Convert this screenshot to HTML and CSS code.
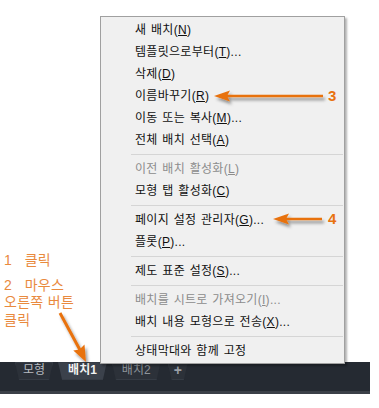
FILE: index.html
```html
<!DOCTYPE html>
<html lang="ko">
<head>
    <meta charset="UTF-8">
    <meta name="viewport" content="width=device-width, initial-scale=1.0">
    <title>배치 탭 메뉴</title>
    <link rel="stylesheet" href="styles.css">
</head>
<body>
    <div class="screen">
        <div class="workspace">
            <div class="note-left">
                <p class="step">1&nbsp;&nbsp;&nbsp;클릭</p>
                <p class="step">2&nbsp;&nbsp;&nbsp;마우스<br>오른쪽 버튼<br>클릭</p>
            </div>

            <ul class="context-menu">
                <li class="item">새 배치(<u>N</u>)</li>
                <li class="item">템플릿으로부터(<u>T</u>)...</li>
                <li class="item">삭제(<u>D</u>)</li>
                <li class="item">이름바꾸기(<u>R</u>)</li>
                <li class="item">이동 또는 복사(<u>M</u>)...</li>
                <li class="item">전체 배치 선택(<u>A</u>)</li>
                <li class="sep"></li>
                <li class="item disabled">이전 배치 활성화(<u>L</u>)</li>
                <li class="item">모형 탭 활성화(<u>C</u>)</li>
                <li class="sep"></li>
                <li class="item">페이지 설정 관리자(<u>G</u>)...</li>
                <li class="item">플롯(<u>P</u>)...</li>
                <li class="sep"></li>
                <li class="item">제도 표준 설정(<u>S</u>)...</li>
                <li class="sep"></li>
                <li class="item disabled">배치를 시트로 가져오기(<u>I</u>)...</li>
                <li class="item">배치 내용 모형으로 전송(<u>X</u>)...</li>
                <li class="sep"></li>
                <li class="item">상태막대와 함께 고정</li>
            </ul>

            <!-- callout arrows -->
            <svg class="arrows" width="379" height="408" viewBox="0 0 379 408">
                <defs>
                    <filter id="shade" x="-20%" y="-50%" width="140%" height="200%">
                        <feDropShadow dx="2" dy="3" stdDeviation="1.4" flood-color="#000" flood-opacity="0.4"/>
                    </filter>
                </defs>
                <g fill="#e8720f" stroke="#e8720f" filter="url(#shade)">
                    <line x1="226" y1="96" x2="323" y2="96" stroke-width="2.6"/>
                    <polygon points="214,96 230,90.5 227,96 230,101.5" stroke="none"/>

                    <line x1="285" y1="219" x2="322" y2="219" stroke-width="2.6"/>
                    <polygon points="273,219 289,213.5 286,219 289,224.5" stroke="none"/>

                    <line x1="60" y1="313" x2="80" y2="350" stroke-width="3"/>
                    <polygon points="86,362 73.3,350.5 79.5,349.5 84.5,344.6" stroke="none"/>
                </g>
            </svg>
            <span class="callout callout-3">3</span>
            <span class="callout callout-4">4</span>
        </div>

        <div class="layout-bar">
            <div class="tabs">
                <span class="tab">모형</span>
                <span class="tab active">배치1</span>
                <span class="tab dim">배치2</span>
                <span class="tab plus">+</span>
            </div>
        </div>
    </div>
</body>
</html>
```

FILE: styles.css
```css
body {
    margin: 0;
    background-color: #ffffff;
    font-family: "Liberation Sans", "Noto Sans CJK KR", sans-serif;
}

.screen {
    width: 379px;
    height: 408px;
    display: flex;
    flex-direction: column;
}

.workspace {
    position: relative;
    height: 362px;
    flex: none;
}

.note-left {
    position: absolute;
    left: 4px;
    top: 252px;
    color: #e98a3e;
    font-size: 14px;
    line-height: 17.5px;
    letter-spacing: 0.3px;
}

.step {
    margin: 0 0 7px 0;
}

.context-menu {
    position: absolute;
    left: 100px;
    top: 16px;
    z-index: 2;
    width: 243px;
    margin: 0;
    padding: 2px 0 1px 0;
    list-style: none;
    background-color: #f0f0f0;
    border: 1px solid #a0a0a0;
    box-shadow: 2px 2px 2px rgba(0, 0, 0, 0.3);
    font-size: 12px;
    letter-spacing: 0.3px;
    word-spacing: 1px;
    color: #111111;
}

.item {
    height: 22px;
    line-height: 22px;
    padding-left: 34px;
    white-space: nowrap;
}

.item u {
    text-underline-offset: 1px;
}

.disabled {
    color: #8c8c8c;
}

.sep {
    height: 1px;
    margin: 3px 1px 3px 30px;
    background-color: #d5d5d5;
}

.arrows {
    position: absolute;
    left: 0;
    top: 0;
    z-index: 3;
    overflow: visible;
    pointer-events: none;
}

.callout {
    position: absolute;
    z-index: 3;
    color: #e8720f;
    font-size: 15px;
    font-weight: bold;
    line-height: 15px;
}

.callout-3 {
    left: 328px;
    top: 88px;
}

.callout-4 {
    left: 328px;
    top: 211px;
}

.layout-bar {
    position: relative;
    z-index: 1;
    width: 370px;
    height: 29px;
    background-color: #252a32;
    border-bottom: 3px solid #3b4048;
}

.tabs {
    display: flex;
    gap: 5px;
    padding-left: 15px;
}

.tab {
    height: 18px;
    line-height: 17px;
    padding: 0 8px;
    font-size: 12px;
    color: #b8bcc1;
    background-color: #2c3139;
    box-shadow: inset 0 0 0 1px #363c45;
    clip-path: polygon(0 0, 100% 0, calc(100% - 4px) 100%, 4px 100%);
    border-radius: 0 0 5px 5px;
}

.tab.active {
    padding: 0 10px;
    background-color: #3b414b;
    color: #f2f2f2;
    font-weight: bold;
}

.tab.dim {
    padding: 0 10px;
    color: #8e949b;
}

.tab.plus {
    margin-left: 2px;
    padding: 0 6px;
    color: #9a9fa6;
    font-weight: bold;
    font-size: 14px;
}
```
